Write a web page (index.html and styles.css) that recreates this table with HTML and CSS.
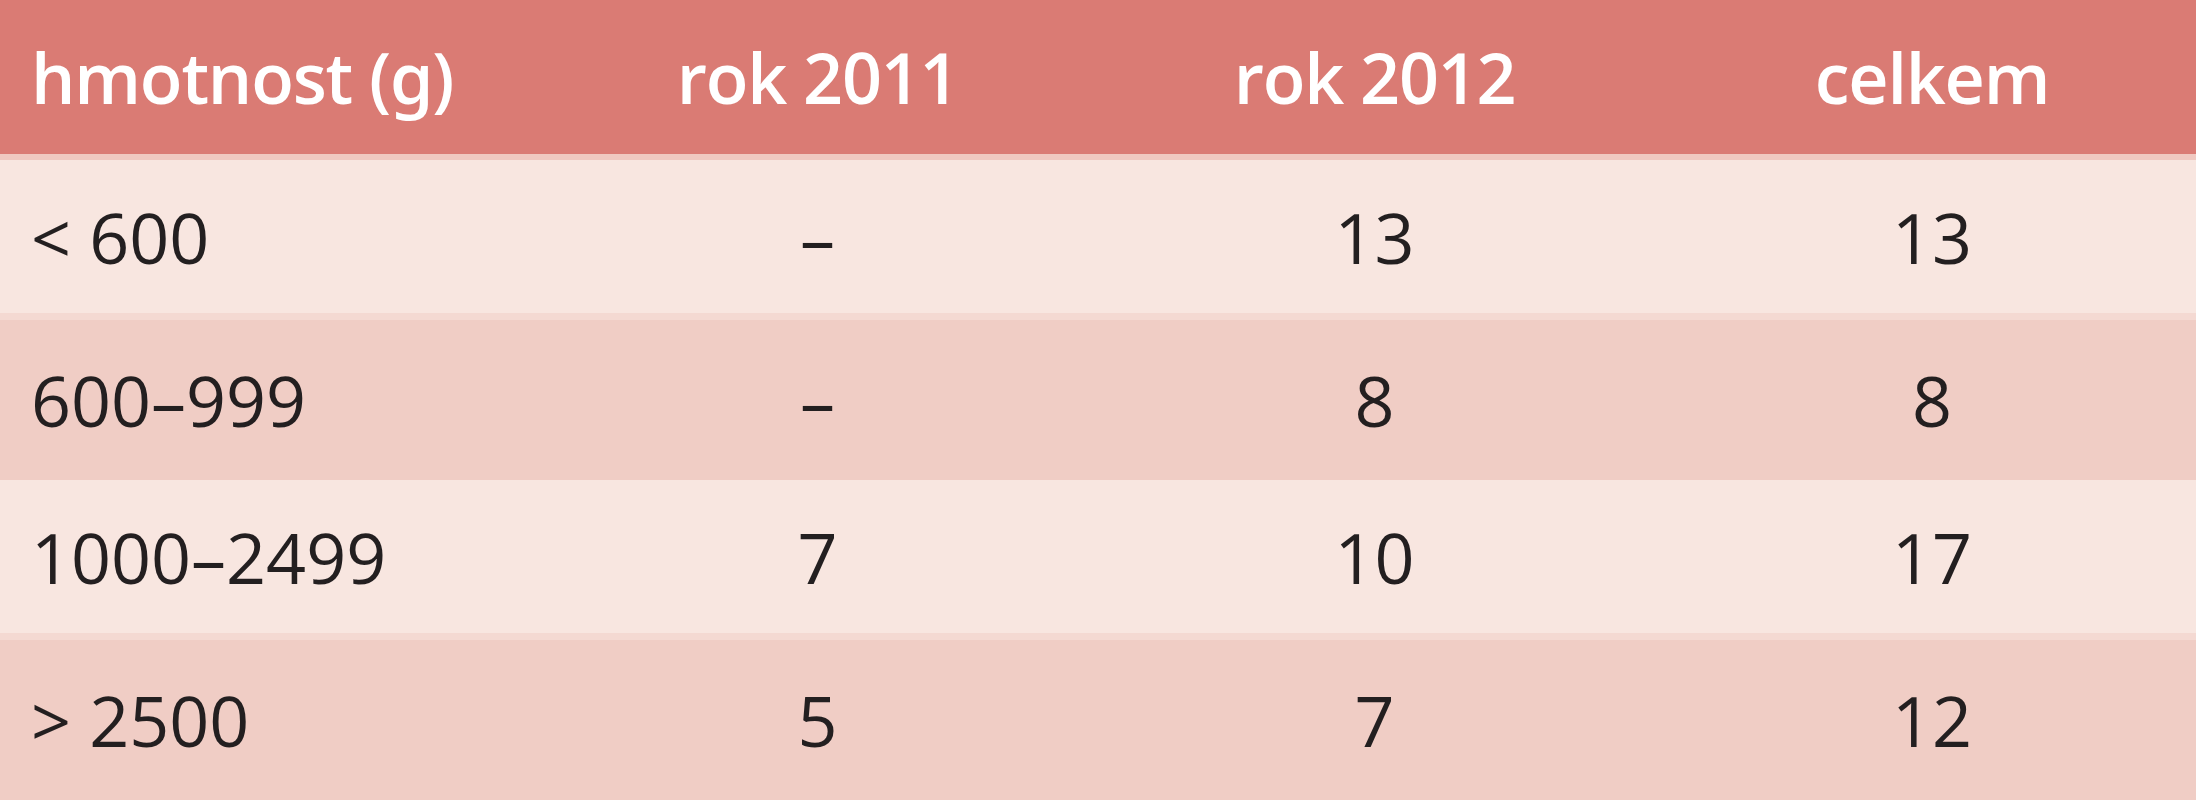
FILE: index.html
```html
<!DOCTYPE html>
<html lang="cs">
<head>
<meta charset="utf-8">
<title>Tabulka</title>
<link rel="stylesheet" href="styles.css">
</head>
<body>
<div class="table">
  <div class="row head">
    <div class="cell first">hmotnost (g)</div>
    <div class="cell">rok 2011</div>
    <div class="cell">rok 2012</div>
    <div class="cell last">celkem</div>
  </div>
  <div class="row light">
    <div class="cell first">&lt; 600</div>
    <div class="cell">–</div>
    <div class="cell">13</div>
    <div class="cell last">13</div>
  </div>
  <div class="row dark">
    <div class="cell first">600–999</div>
    <div class="cell">–</div>
    <div class="cell">8</div>
    <div class="cell last">8</div>
  </div>
  <div class="row light">
    <div class="cell first">1000–2499</div>
    <div class="cell">7</div>
    <div class="cell">10</div>
    <div class="cell last">17</div>
  </div>
  <div class="row dark">
    <div class="cell first">&gt; 2500</div>
    <div class="cell">5</div>
    <div class="cell">7</div>
    <div class="cell last">12</div>
  </div>
</div>
</body>
</html>
```
FILE: styles.css
```css
html, body {
  margin: 0;
  padding: 0;
  background: #f0cdc5;
}
.table {
  width: 2196px;
  font-family: "Open Sans", "Noto Sans", sans-serif;
  font-size: 70px;
  color: #231f20;
}
.row {
  display: grid;
  grid-template-columns: 539px 557px 557px 543px;
  align-items: center;
  height: 160px;
  box-sizing: border-box;
}
.cell {
  text-align: center;
  white-space: nowrap;
  line-height: 1;
}
.cell.first {
  text-align: left;
  padding-left: 31px;
}
.cell.last {
  padding-left: 15px;
}
.head {
  background: #da7b74;
  color: #ffffff;
  font-weight: 600;
  letter-spacing: -1.2px;
  font-feature-settings: "salt" 1, "ss01" 1;
  border-bottom: 6px solid #f0c8c0;
}
.light {
  background: #f8e6e0;
  border-bottom: 7px solid #f4d9d2;
}
.dark {
  background: #f0cdc5;
}
```
